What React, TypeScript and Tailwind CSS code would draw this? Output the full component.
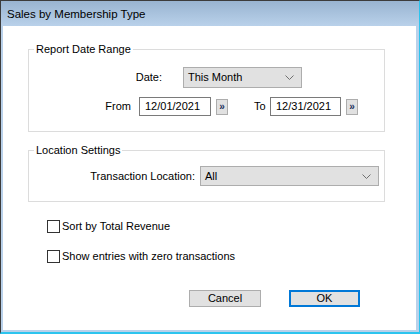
import { useState } from "react";

function Chevron() {
  return (
    <svg width="9" height="5" viewBox="0 0 9 5" className="shrink-0">
      <path d="M0.5 0.5 L4.5 4.5 L8.5 0.5" fill="none" stroke="#707070" strokeWidth="1" />
    </svg>
  );
}

function Combo({ value, className }: { value: string; className: string }) {
  return (
    <div
      className={`flex items-center justify-between border border-[#adadad] bg-[#e1e1e1] pl-[4px] pr-[7px] ${className}`}
    >
      <span>{value}</span>
      <Chevron />
    </div>
  );
}

function DateBox({ value, className }: { value: string; className: string }) {
  return (
    <div className={`flex h-[19px] items-center border border-[#7a7a7a] bg-white pl-[5px] ${className}`}>
      {value}
    </div>
  );
}

function PickButton({ className }: { className: string }) {
  return (
    <button
      type="button"
      className={`flex h-[16px] w-[12px] items-center justify-center border border-[#adadad] bg-[#e1e1e1] text-[10px] font-bold leading-none text-[#1a2f5a] ${className}`}
    >
      »
    </button>
  );
}

function Check({ label, checked, onChange, className }: {
  label: string;
  checked: boolean;
  onChange: (v: boolean) => void;
  className: string;
}) {
  return (
    <label className={`flex h-[13px] items-center ${className}`}>
      <span
        onClick={() => onChange(!checked)}
        className="flex h-[13px] w-[13px] items-center justify-center border border-[#333333] bg-white text-[10px] leading-none"
      >
        {checked ? "✓" : null}
      </span>
      <span className="ml-[2px]">{label}</span>
    </label>
  );
}

export default function App() {
  const [sortByRevenue, setSortByRevenue] = useState(false);
  const [showZero, setShowZero] = useState(false);

  return (
    <div className="flex h-[334px] w-[420px] flex-col border-l border-t border-r border-b-2 border-l-[#3c3c3c] border-t-[#3c3c3c] border-r-[#2cc4ee] border-b-[#2cc4ee] font-[family-name:'Liberation_Sans',Arial,sans-serif] text-[11px] text-black">
      <div className="flex h-[25px] shrink-0 items-center bg-gradient-to-b from-[#99b4d1] to-[#b9d1ea] pl-[6px] pt-[3px] text-[11.5px]">
        Sales by Membership Type
      </div>

      <div className="flex flex-1 flex-col border-l-2 border-r-[3px] border-b-2 border-[#b9d1ea] bg-white">
        <fieldset className="ml-[25px] mt-[16px] w-[357px] border border-[#dcdcdc] pl-[5px] pb-[15px]">
          <legend className="px-[2px] leading-[14px]">Report Date Range</legend>
          <div className="mt-[11px] flex h-[21px] items-center">
            <span className="w-[128px] text-right">Date:</span>
            <Combo value="This Month" className="ml-[21px] h-[21px] w-[119px]" />
          </div>
          <div className="mt-[9px] flex h-[19px] items-center">
            <span className="w-[97px] text-right">From</span>
            <DateBox value="12/01/2021" className="ml-[8px] w-[72px]" />
            <PickButton className="ml-[5px]" />
            <span className="ml-[26px] w-[13px]">To</span>
            <DateBox value="12/31/2021" className="ml-[3px] w-[71px]" />
            <PickButton className="ml-[5px]" />
          </div>
        </fieldset>

        <fieldset className="ml-[25px] mt-[11px] w-[357px] border border-[#dcdcdc] pl-[5px] pb-[15px]">
          <legend className="px-[2px] leading-[14px]">Location Settings</legend>
          <div className="mt-[9px] flex h-[20px] items-center">
            <span className="w-[161px] text-right">Transaction Location:</span>
            <Combo value="All" className="ml-[5px] h-[20px] w-[179px]" />
          </div>
        </fieldset>

        <Check
          label="Sort by Total Revenue"
          checked={sortByRevenue}
          onChange={setSortByRevenue}
          className="ml-[44px] mt-[18px]"
        />
        <Check
          label="Show entries with zero transactions"
          checked={showZero}
          onChange={setShowZero}
          className="ml-[44px] mt-[17px]"
        />

        <div className="mt-[27px] flex">
          <button
            type="button"
            className="ml-[186px] h-[17px] w-[72px] border border-[#adadad] bg-[#e1e1e1] leading-none"
          >
            Cancel
          </button>
          <button
            type="button"
            className="ml-[28px] h-[17px] w-[71px] border-2 border-[#0078d7] bg-[#e1e1e1] leading-none"
          >
            OK
          </button>
        </div>
      </div>
    </div>
  );
}
